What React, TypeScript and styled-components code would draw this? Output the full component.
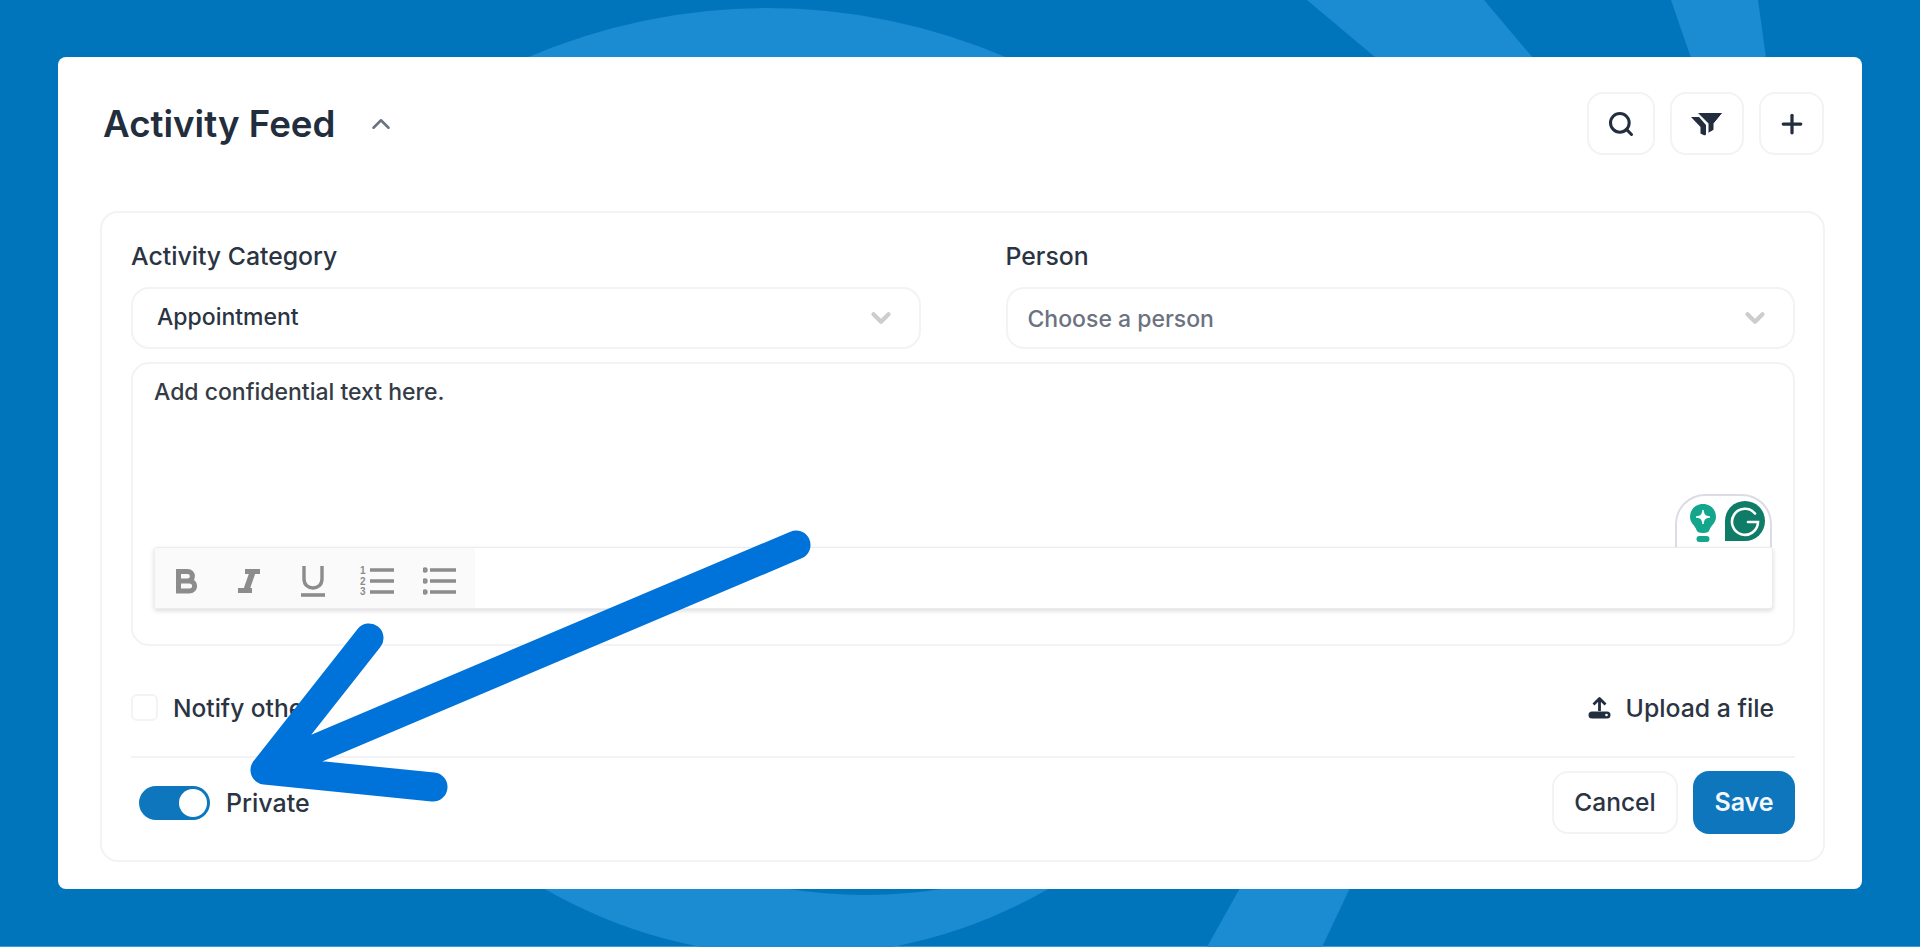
import React from 'react';
import styled, {createGlobalStyle} from "styled-components";
import {ChevronDown, ChevronUp, Plus, Search} from "lucide-react";

const GlobalStyle = createGlobalStyle`
    html, body {
        margin: 0;
        padding: 0;
    }
    body {
        font-family: Inter, "Liberation Sans", sans-serif;
        color: #2b3443;
    }
    * {
        box-sizing: border-box;
    }
`

const BackgroundShapes = () => (
    <Backdrop viewBox="0 0 1920 947" aria-hidden="true">
        <path d="M526 58 A606 606 0 0 1 1008 58 Z" fill="#1b8bd2"/>
        <path d="M543 888 A506 506 0 0 0 1050 888 Z" fill="#1b8bd2"/>
        <path d="M783 888 Q865 902 948 888 Z" fill="#0075bc"/>
        <path d="M1307 0 L1484 0 L1533 58 L1376 58 Z" fill="#1b8bd2"/>
        <path d="M1671 0 L1758 0 L1766 58 L1691 58 Z" fill="#1b8bd2"/>
        <path d="M1240 888 L1350 888 L1322 947 L1207 947 Z" fill="#1b8bd2"/>
    </Backdrop>
)

const FilterIcon = () => (
    <svg width="34" height="24" viewBox="0 0 34 24" fill="#222d3d">
        <path d="M1 5 H9 L16 13 V22 Q16 24 13.5 23 L10.5 21.5 V15 Z"/>
        <path d="M7 0.5 H33 L24 11.5 V18 L18 21.5 V11.5 Z" stroke="#fff" strokeWidth="1"/>
    </svg>
)

const UploadIcon = () => (
    <svg width="23" height="22" viewBox="0 0 23 22" fill="none">
        <path d="M11.5 14 V2 M5.5 7.5 L11.5 1.5 L17.5 7.5" stroke="#222d3d" strokeWidth="2.8" strokeLinejoin="round"/>
        <rect x="0.5" y="14.5" width="22" height="7" rx="3.5" fill="#222d3d"/>
        <circle cx="18.5" cy="18" r="1.3" fill="#fff"/>
    </svg>
)

const BoldIcon = () => (
    <svg width="24" height="28" viewBox="0 0 24 28" fill="none" stroke="#8c8c8c" strokeWidth="5">
        <path d="M4.5 14 H13.5 C20 14 20 4.5 13.5 4.5 H4.5 V24 H15 C22.5 24 22.5 14 15 14"/>
    </svg>
)

const ItalicIcon = () => (
    <svg width="24" height="26" viewBox="0 0 24 26" fill="none" stroke="#8c8c8c">
        <path d="M8 3.5 H23" strokeWidth="5"/>
        <path d="M1 22.5 H15" strokeWidth="5"/>
        <path d="M16 3 L9 23" strokeWidth="6"/>
    </svg>
)

const UnderlineIcon = () => (
    <svg width="26" height="32" viewBox="0 0 26 32" fill="none" stroke="#8c8c8c" strokeWidth="3.4">
        <path d="M4 1 V14 C4 26 22 26 22 14 V1"/>
        <path d="M1 30 H25" strokeWidth="3.6"/>
    </svg>
)

const OrderedIcon = () => (
    <svg width="35" height="30" viewBox="0 0 35 30" fill="none" stroke="#8c8c8c" strokeWidth="3.4">
        <path d="M11 4 H35 M11 15 H35 M11 26 H35"/>
        <NumberMark x="1" y="8">1</NumberMark>
        <NumberMark x="1" y="19">2</NumberMark>
        <NumberMark x="1" y="29">3</NumberMark>
    </svg>
)

const BulletIcon = () => (
    <svg width="33" height="30" viewBox="0 0 33 30" fill="#8c8c8c" stroke="#8c8c8c" strokeWidth="3.4">
        <path d="M7 4 H33 M7 15 H33 M7 26 H33"/>
        <circle cx="2" cy="4" r="1"/>
        <circle cx="2" cy="15" r="1"/>
        <circle cx="2" cy="26" r="1"/>
    </svg>
)

const GrammarlyBadge = () => (
    <Badge>
        <svg width="26" height="41" viewBox="0 -3 26 41">
            <path d="M13 0 C21 0 26 6 26 13 C26 19 21 21 19.5 26 C19 28 17 29 13 29 C9 29 7 28 6.5 26 C5 21 0 19 0 13 C0 6 5 0 13 0 Z" fill="#13a68c"/>
            <path d="M13 6 C14 11 15 12 20 13 C15 14 14 15 13 20 C12 15 11 14 6 13 C11 12 12 11 13 6 Z" fill="#fff" stroke="#fff"/>
            <rect x="6.5" y="32" width="13" height="6" rx="3" fill="#13a68c"/>
        </svg>
        <svg width="40" height="40" viewBox="0 0 40 40" fill="none">
            <path d="M20 0 A20 20 0 0 1 20 40 H0 V20 A20 20 0 0 1 20 0 Z" fill="#0f7c68"/>
            <path d="M30 12.5 A13 13 0 1 0 33 21 H23" stroke="#fff" strokeWidth="2.6" strokeLinecap="round"/>
        </svg>
    </Badge>
)

const AnnotationArrow = () => (
    <ArrowLayer viewBox="0 0 1920 947" aria-hidden="true">
        <path
            d="M796 545 L265 770 M369 638 L265 770 L433 787"
            fill="none"
            stroke="#0073da"
            strokeWidth="29"
            strokeLinecap="round"
            strokeLinejoin="round"
        />
    </ArrowLayer>
)

export default function App() {
    return (
        <Page>
            <GlobalStyle/>
            <BackgroundShapes/>
            <Card>
                <Header>
                    <TitleGroup>
                        <Title>Activity Feed</Title>
                        <ChevronUp size={30} color="#6b7280" strokeWidth={2}/>
                    </TitleGroup>
                    <HeaderActions>
                        <IconButton $width={68}><Search size={28} strokeWidth={2.6} color="#222d3d"/></IconButton>
                        <IconButton $width={74}><FilterIcon/></IconButton>
                        <IconButton $width={65}><Plus size={30} strokeWidth={2.6} color="#222d3d"/></IconButton>
                    </HeaderActions>
                </Header>
                <Panel>
                    <FieldGrid>
                        <Field>
                            <FieldLabel>Activity Category</FieldLabel>
                            <Select>
                                <SelectValue>Appointment</SelectValue>
                                <ChevronDown size={30} color="#cdcdcd" strokeWidth={3.4}/>
                            </Select>
                        </Field>
                        <Field>
                            <FieldLabel>Person</FieldLabel>
                            <Select $placeholder>
                                <SelectValue $placeholder>Choose a person</SelectValue>
                                <ChevronDown size={30} color="#cdcdcd" strokeWidth={3.4}/>
                            </Select>
                        </Field>
                    </FieldGrid>
                    <Editor>
                        <EditorText>Add confidential text here.</EditorText>
                        <GrammarlyBadge/>
                        <Toolbar>
                            <ToolGroup>
                                <ToolButton><BoldIcon/></ToolButton>
                                <ToolButton><ItalicIcon/></ToolButton>
                                <ToolButton><UnderlineIcon/></ToolButton>
                                <ToolButton><OrderedIcon/></ToolButton>
                                <ToolButton><BulletIcon/></ToolButton>
                            </ToolGroup>
                        </Toolbar>
                    </Editor>
                    <OptionsRow>
                        <CheckLabel>
                            <Checkbox/>
                            Notify others
                        </CheckLabel>
                        <UploadLink>
                            <UploadIcon/>
                            Upload a file
                        </UploadLink>
                    </OptionsRow>
                    <Footer>
                        <ToggleLabel>
                            <Toggle><Knob/></Toggle>
                            Private
                        </ToggleLabel>
                        <FooterActions>
                            <CancelButton>Cancel</CancelButton>
                            <SaveButton>Save</SaveButton>
                        </FooterActions>
                    </Footer>
                </Panel>
            </Card>
            <AnnotationArrow/>
        </Page>
    );
}

const Page = styled.div`
    position: relative;
    height: 947px;
    overflow: hidden;
    padding: 57px 58px 58px;
    background: #0075bc;
    box-shadow: inset 0 -1px 0 #3a9bd8;
`
const Backdrop = styled.svg`
    position: absolute;
    inset: 0;
    width: 1920px;
    height: 947px;
`
const ArrowLayer = styled.svg`
    position: absolute;
    inset: 0;
    width: 1920px;
    height: 947px;
    pointer-events: none;
`
const Card = styled.div`
    position: relative;
    height: 832px;
    padding: 35px 37px 27px 42px;
    background: #fff;
    border-radius: 8px;
`
const Header = styled.div`
    display: flex;
    justify-content: space-between;
    align-items: center;
    height: 63px;
    margin-bottom: 56px;
`
const TitleGroup = styled.div`
    display: flex;
    align-items: center;
    gap: 31px;
    padding-left: 3px;
`
const Title = styled.h1`
    margin: 0;
    font-size: 36.7px;
    font-weight: 600;
    color: #222d3d;
`
const HeaderActions = styled.div`
    display: flex;
    gap: 15px;
    margin-right: 1px;
`
const IconButton = styled.button<{$width: number}>`
    display: flex;
    align-items: center;
    justify-content: center;
    width: ${props => props.$width}px;
    height: 63px;
    padding: 0;
    background: #fff;
    border: 2px solid #f3f3f5;
    border-radius: 16px;
`
const Panel = styled.div`
    height: 651px;
    padding: 28px 28px 26px 29px;
    border: 2px solid #f3f3f5;
    border-radius: 18px;
`
const FieldGrid = styled.div`
    display: grid;
    grid-template-columns: 1fr 1fr;
    gap: 85px;
`
const Field = styled.div`
    display: flex;
    flex-direction: column;
    gap: 16px;
`
const FieldLabel = styled.div`
    font-size: 24.8px;
    line-height: 30px;
    font-weight: 500;
    color: #2b3443;
`
const Select = styled.div<{$placeholder?: boolean}>`
    display: flex;
    align-items: center;
    justify-content: space-between;
    height: 62px;
    padding: 0 23px 0 ${props => props.$placeholder ? 20 : 24}px;
    border: 2px solid #f3f3f5;
    border-radius: 18px;
`
const SelectValue = styled.span<{$placeholder?: boolean}>`
    font-size: 23px;
    font-weight: 500;
    color: ${props => props.$placeholder ? "#6b7280" : "#2b3443"};
    margin-top: ${props => props.$placeholder ? 2 : -2}px;
`
const Editor = styled.div`
    position: relative;
    display: flex;
    flex-direction: column;
    justify-content: space-between;
    height: 284px;
    margin-top: 13px;
    padding: 13px 20px 35px 21px;
    border: 2px solid #f3f3f5;
    border-radius: 18px;
`
const EditorText = styled.div`
    font-size: 23px;
    line-height: 30px;
    font-weight: 500;
    color: #333b46;
`
const Badge = styled.div`
    position: absolute;
    right: 21px;
    bottom: 97px;
    display: flex;
    align-items: flex-start;
    justify-content: space-between;
    width: 97px;
    height: 53px;
    padding: 5px 5px 0 13px;
    background: #fff;
    border: 2px solid #dcdce8;
    border-bottom: none;
    border-radius: 30px 30px 0 0;
`
const Toolbar = styled.div`
    position: relative;
    height: 62px;
    background: #fff;
    border: 1px solid #ececf0;
    border-radius: 3px;
    box-shadow: 0 2px 5px rgba(0, 0, 0, 0.14);
`
const ToolGroup = styled.div`
    display: flex;
    align-items: center;
    width: 320px;
    height: 100%;
    padding-top: 5px;
    background: #fafafa;
`
const ToolButton = styled.span`
    display: flex;
    align-items: center;
    justify-content: center;
    width: 63.5px;
    &:first-child {
        margin-left: -1px;
    }
`
const NumberMark = styled.text`
    font-family: "Liberation Sans", sans-serif;
    font-size: 10px;
    font-weight: 700;
    fill: #8c8c8c;
    stroke: none;
`
const OptionsRow = styled.div`
    display: flex;
    align-items: center;
    justify-content: space-between;
    height: 27px;
    margin-top: 48px;
`
const CheckLabel = styled.label`
    display: flex;
    align-items: center;
    gap: 15px;
    font-size: 24.5px;
    font-weight: 500;
    color: #2b3443;
`
const Checkbox = styled.span`
    width: 27px;
    height: 27px;
    background: #fff;
    border: 2px solid #f3f3f5;
    border-radius: 6px;
`
const UploadLink = styled.div`
    display: flex;
    align-items: center;
    gap: 15px;
    padding-right: 21px;
    font-size: 24.8px;
    font-weight: 500;
    color: #2b3443;
`
const Footer = styled.div`
    display: flex;
    align-items: center;
    justify-content: space-between;
    margin-top: 35px;
    padding-top: 13px;
    border-top: 2px solid #f3f3f5;
`
const ToggleLabel = styled.div`
    display: flex;
    align-items: center;
    gap: 16px;
    padding-left: 8px;
    font-size: 25px;
    font-weight: 500;
    color: #2b3443;
`
const Toggle = styled.div`
    display: flex;
    justify-content: flex-end;
    align-items: center;
    width: 71px;
    height: 34px;
    padding: 0 3px;
    background: #0d76bc;
    border-radius: 17px;
`
const Knob = styled.div`
    width: 28px;
    height: 28px;
    background: #fff;
    border-radius: 50%;
`
const FooterActions = styled.div`
    display: flex;
    gap: 15px;
`
const CancelButton = styled.button`
    width: 126px;
    height: 63px;
    padding: 0 0 2px;
    font-family: inherit;
    font-size: 24.5px;
    font-weight: 500;
    color: #2b3443;
    background: #fff;
    border: 2px solid #f3f3f5;
    border-radius: 16px;
`
const SaveButton = styled.button`
    width: 102px;
    height: 63px;
    padding: 0 0 2px;
    font-family: inherit;
    font-size: 25px;
    font-weight: 600;
    color: #f2f8fc;
    background: #0d76bc;
    border: none;
    border-radius: 16px;
`
